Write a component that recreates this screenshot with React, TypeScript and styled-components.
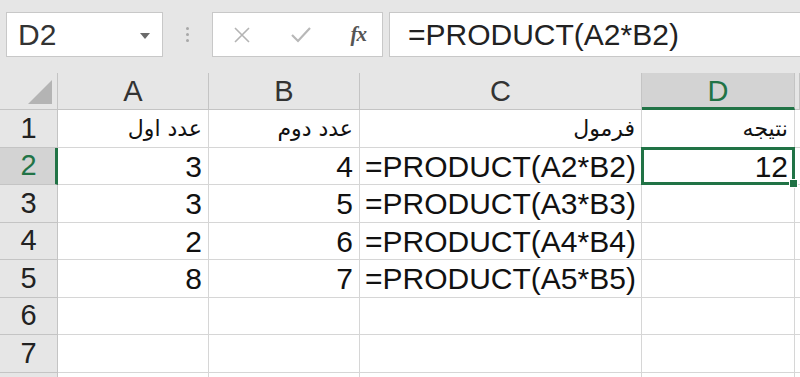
import React from 'react';
import styled, { createGlobalStyle } from 'styled-components';

const GlobalStyle = createGlobalStyle`
  html, body {
    margin: 0;
    padding: 0;
    background: #e6e6e6;
    overflow: hidden;
  }
  * {
    box-sizing: border-box;
  }
`;

const green = '#217346';
const gridLine = '#d6d6d6';
const headerLine = '#c4c4c4';

const Page = styled.div`
  width: 800px;
  height: 377px;
  overflow: hidden;
  background: #e6e6e6;
  font-family: "Liberation Sans", Arial, "DejaVu Sans", sans-serif;
`;

const Toolbar = styled.div`
  height: 73px;
  display: flex;
  align-items: flex-start;
  padding: 12px 0 0 6px;
`;

const NameBox = styled.div`
  width: 157px;
  height: 45px;
  background: #fff;
  border: 1px solid #c8c8c8;
  display: flex;
  align-items: center;
  justify-content: space-between;
  padding: 0 12px 0 11px;
  font-size: 30px;
  color: #333;
`;

const DropArrow = styled.span`
  width: 0;
  height: 0;
  border-left: 5px solid transparent;
  border-right: 5px solid transparent;
  border-top: 6px solid #6a6a6a;
  margin-top: 2px;
`;

const Grip = styled.div`
  width: 49px;
  height: 45px;
  display: flex;
  flex-direction: column;
  align-items: center;
  justify-content: center;
  gap: 3px;
`;

const GripDot = styled.span`
  width: 3px;
  height: 3px;
  border-radius: 50%;
  background: #a8a8a8;
`;

const ButtonBox = styled.div`
  width: 171px;
  height: 45px;
  background: #fff;
  border: 1px solid #c8c8c8;
  display: flex;
  align-items: center;
  justify-content: space-between;
  padding: 0 16px 0 20px;
`;

const Fx = styled.span`
  font-family: "Liberation Serif", "Times New Roman", serif;
  font-style: italic;
  font-weight: bold;
  font-size: 21px;
  color: #555;
  letter-spacing: -1px;
`;

const FormulaInput = styled.div`
  flex: 1;
  height: 45px;
  margin-left: 6px;
  background: #fff;
  border: 1px solid #c8c8c8;
  border-right: none;
  display: flex;
  align-items: center;
  padding-left: 18px;
  font-size: 30px;
  color: #222;
`;

const Sheet = styled.div`
  display: grid;
  grid-template-columns: 58px 151px 151px 282px 153px 5px;
  grid-template-rows: 37px;
  grid-auto-rows: 37.5px;
  background: #fff;
`;

const Corner = styled.div`
  background: #e6e6e6;
  border-right: 1px solid ${headerLine};
  border-bottom: 1px solid ${headerLine};
  display: flex;
  align-items: flex-end;
  justify-content: flex-end;
  padding: 0 5px 5px 0;
`;

const ColHeader = styled.div<{ $active?: boolean }>`
  background: ${p => (p.$active ? '#d3d3d3' : '#e6e6e6')};
  color: ${p => (p.$active ? green : '#333')};
  border-right: 1px solid ${headerLine};
  border-bottom: ${p => (p.$active ? `3px solid ${green}` : `1px solid ${headerLine}`)};
  display: flex;
  align-items: center;
  justify-content: center;
  font-size: 29px;
  padding-top: ${p => (p.$active ? '2px' : '0')};
`;

const RowHeader = styled.div<{ $active?: boolean }>`
  background: ${p => (p.$active ? '#d3d3d3' : '#e6e6e6')};
  color: ${p => (p.$active ? green : '#222')};
  border-right: ${p => (p.$active ? `3px solid ${green}` : `1px solid ${headerLine}`)};
  border-bottom: 1px solid ${headerLine};
  display: flex;
  align-items: center;
  justify-content: center;
  font-size: 29px;
  padding-left: ${p => (p.$active ? '2px' : '0')};
`;

const Cell = styled.div<{ $align?: 'left' | 'right' }>`
  position: relative;
  border-right: 1px solid ${gridLine};
  border-bottom: 1px solid ${gridLine};
  display: flex;
  align-items: center;
  justify-content: ${p => (p.$align === 'left' ? 'flex-start' : 'flex-end')};
  padding: 2px 6px 0 5px;
  font-size: 30px;
  color: #111;
  white-space: nowrap;
`;

const Arabic = styled.span`
  direction: rtl;
  font-family: "DejaVu Sans", "Liberation Sans", sans-serif;
  font-size: 22px;
  padding-bottom: 2px;
`;

const Selection = styled.div`
  position: absolute;
  left: -1px;
  top: -1px;
  right: -1px;
  bottom: -1px;
  border: 3px solid ${green};
  pointer-events: none;
  z-index: 2;
`;

const Handle = styled.span`
  position: absolute;
  right: -6px;
  bottom: -6px;
  width: 9px;
  height: 9px;
  background: ${green};
  border: 1px solid #fff;
`;

const XIcon = () => (
  <svg width="18" height="18" viewBox="0 0 18 18">
    <path d="M2 2 L16 16 M16 2 L2 16" stroke="#b4b4b4" strokeWidth="1.6" fill="none" />
  </svg>
);

const CheckIcon = () => (
  <svg width="22" height="18" viewBox="0 0 22 18">
    <path d="M2 9 L8 15 L20 2" stroke="#b8b8b8" strokeWidth="2.2" fill="none" />
  </svg>
);

const SelectAll = () => (
  <svg width="24" height="24" viewBox="0 0 24 24">
    <polygon points="24,0 24,24 0,24" fill="#b4b4b4" />
  </svg>
);

type Row = { a: string; b: string; c: string; d: string; arabic?: boolean };

const rows: Row[] = [
  { a: 'عدد اول', b: 'عدد دوم', c: 'فرمول', d: 'نتیجه', arabic: true },
  { a: '3', b: '4', c: '=PRODUCT(A2*B2)', d: '12' },
  { a: '3', b: '5', c: '=PRODUCT(A3*B3)', d: '' },
  { a: '2', b: '6', c: '=PRODUCT(A4*B4)', d: '' },
  { a: '8', b: '7', c: '=PRODUCT(A5*B5)', d: '' },
  { a: '', b: '', c: '', d: '' },
  { a: '', b: '', c: '', d: '' },
  { a: '', b: '', c: '', d: '' },
];

const App: React.FC = () => {
  const text = (value: string, arabic?: boolean) =>
    arabic ? <Arabic>{value}</Arabic> : value;

  return (
    <Page>
      <GlobalStyle />
      <Toolbar>
        <NameBox>
          D2
          <DropArrow />
        </NameBox>
        <Grip>
          <GripDot />
          <GripDot />
          <GripDot />
        </Grip>
        <ButtonBox>
          <XIcon />
          <CheckIcon />
          <Fx>fx</Fx>
        </ButtonBox>
        <FormulaInput>=PRODUCT(A2*B2)</FormulaInput>
      </Toolbar>

      <Sheet>
        <Corner>
          <SelectAll />
        </Corner>
        <ColHeader>A</ColHeader>
        <ColHeader>B</ColHeader>
        <ColHeader>C</ColHeader>
        <ColHeader $active>D</ColHeader>
        <ColHeader />

        {rows.map((r, i) => {
          const n = i + 1;
          // row 8 only peeks in at the bottom edge, so its number stays hidden
          return (
            <React.Fragment key={n}>
              <RowHeader $active={n === 2}>{n < 8 ? n : ''}</RowHeader>
              <Cell>{text(r.a, r.arabic)}</Cell>
              <Cell>{text(r.b, r.arabic)}</Cell>
              <Cell $align={r.arabic ? 'right' : 'left'}>{text(r.c, r.arabic)}</Cell>
              <Cell>
                {text(r.d, r.arabic)}
                {n === 2 && (
                  <Selection>
                    <Handle />
                  </Selection>
                )}
              </Cell>
              <Cell />
            </React.Fragment>
          );
        })}
      </Sheet>
    </Page>
  );
};

export default App;
